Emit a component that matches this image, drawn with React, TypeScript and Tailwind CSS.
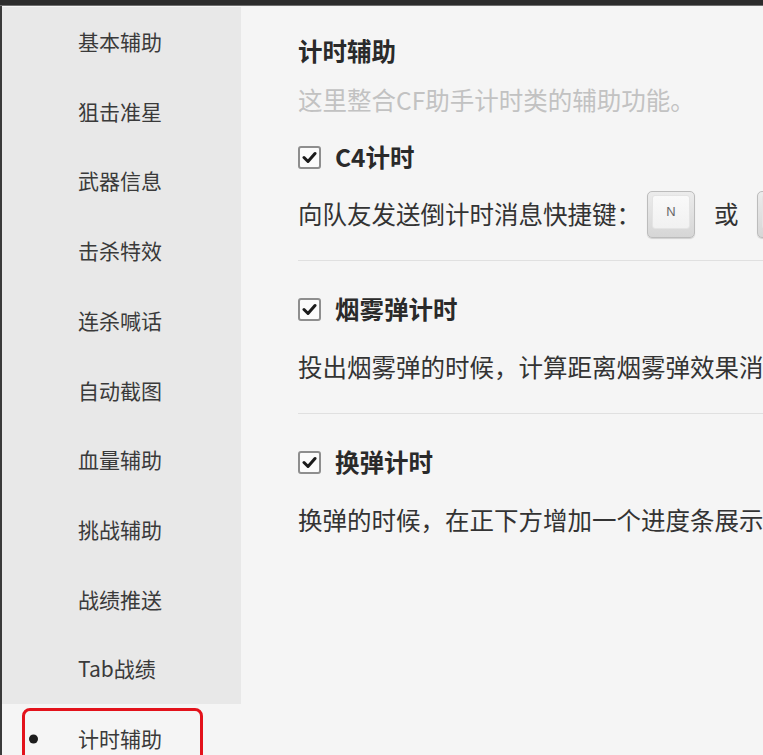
import React from "react";

const FONT = '"Microsoft YaHei", "Noto Sans CJK SC", "Noto Sans", sans-serif';

const navItems = [
  "基本辅助",
  "狙击准星",
  "武器信息",
  "击杀特效",
  "连杀喊话",
  "自动截图",
  "血量辅助",
  "挑战辅助",
  "战绩推送",
  "Tab战绩",
  "计时辅助",
];

function CheckBox() {
  return (
    <div className="w-[23px] h-[23px] shrink-0 rounded-[3px] border-2 border-[#8e8e8e] bg-[#fbfbfb] flex items-center justify-center">
      <svg width="15" height="13" viewBox="0 0 15 13">
        <path d="M2 6.5 L6 10.5 L13 2.5" fill="none" stroke="#1a1a1a" strokeWidth="3" strokeLinecap="round" strokeLinejoin="round" />
      </svg>
    </div>
  );
}

function Key({ label }: { label: string }) {
  return (
    <div className="w-[48px] h-[47px] shrink-0 rounded-[5px] border border-[#bcbcbc] bg-gradient-to-b from-[#ececec] to-[#d6d6d6] pt-[3px] px-[4px] pb-[8px] shadow-[0_1px_1px_rgba(0,0,0,0.15)]">
      <div className="w-full h-full rounded-[3px] border border-[#e4e4e4] bg-gradient-to-b from-[#f9f9f9] to-[#f1f1f1] flex items-center justify-center text-[13px] text-[#666] font-[Liberation_Sans,sans-serif]">
        {label}
      </div>
    </div>
  );
}

function CheckRow({ label }: { label: string }) {
  return (
    <div className="h-[30px] flex items-center gap-[14px]">
      <CheckBox />
      <span className="text-[24.5px] leading-[30px] font-bold text-[#2a2a2a]">{label}</span>
    </div>
  );
}

export default function App() {
  return (
    <div
      className="w-[763px] h-[755px] overflow-hidden relative flex flex-col bg-[#f5f5f5]"
      style={{ fontFamily: FONT }}
    >
      <div className="h-[6px] shrink-0 bg-[#2c2c2c] border-b border-[#6e6e6e]" />
      <div className="flex flex-1 min-h-0">
        <div className="w-[2px] shrink-0 bg-[#3a3a3a]" />
        <div className="w-[239px] shrink-0 flex flex-col pt-[1px]">
          {navItems.map((item, i) => {
            const active = i === navItems.length - 1;
            return (
              <div
                key={item}
                className={`h-[69.7px] shrink-0 relative flex items-center pl-[76px] text-[21px] text-[#3a3a3a] ${
                  active ? "bg-[#f5f5f5]" : "bg-[#e8e8e8]"
                }`}
              >
                {active && (
                  <span className="absolute left-[27px] top-1/2 -translate-y-1/2 w-[9px] h-[9px] rounded-full bg-[#1c1c1c]" />
                )}
                {item}
              </div>
            );
          })}
        </div>
        <div className="flex-1 min-w-0 pl-[57px] pt-[30px] flex flex-col whitespace-nowrap">
          <div className="h-[30px] flex items-center text-[24.5px] font-bold text-[#2a2a2a]">计时辅助</div>
          <div className="mt-[19px] h-[30px] flex items-center text-[24.5px] text-[#c2c2c2]">这里整合CF助手计时类的辅助功能。</div>

          <div className="mt-[27px]">
            <CheckRow label="C4计时" />
          </div>
          <div className="mt-[18px] h-[48px] flex items-center text-[24.5px] text-[#333]">
            <span>向队友发送倒计时消息快捷键：</span>
            <div className="ml-[6px]">
              <Key label="N" />
            </div>
            <span className="ml-[19px]">或</span>
            <div className="ml-[18px]">
              <Key label="M" />
            </div>
          </div>
          <div className="mt-[22px] h-px bg-[#e0e0e0]" />

          <div className="mt-[33px]">
            <CheckRow label="烟雾弹计时" />
          </div>
          <div className="mt-[19px] h-[48px] flex items-center text-[24.5px] text-[#333]">
            投出烟雾弹的时候，计算距离烟雾弹效果消失的时间。
          </div>
          <div className="mt-[22px] h-px bg-[#e0e0e0]" />

          <div className="mt-[33px]">
            <CheckRow label="换弹计时" />
          </div>
          <div className="mt-[19px] h-[48px] flex items-center text-[24.5px] text-[#333]">
            换弹的时候，在正下方增加一个进度条展示。
          </div>
        </div>
      </div>
      <div className="absolute left-[22px] top-[708px] w-[181px] h-[70px] rounded-[8px] border-[3px] border-[#e3121b]" />
    </div>
  );
}
